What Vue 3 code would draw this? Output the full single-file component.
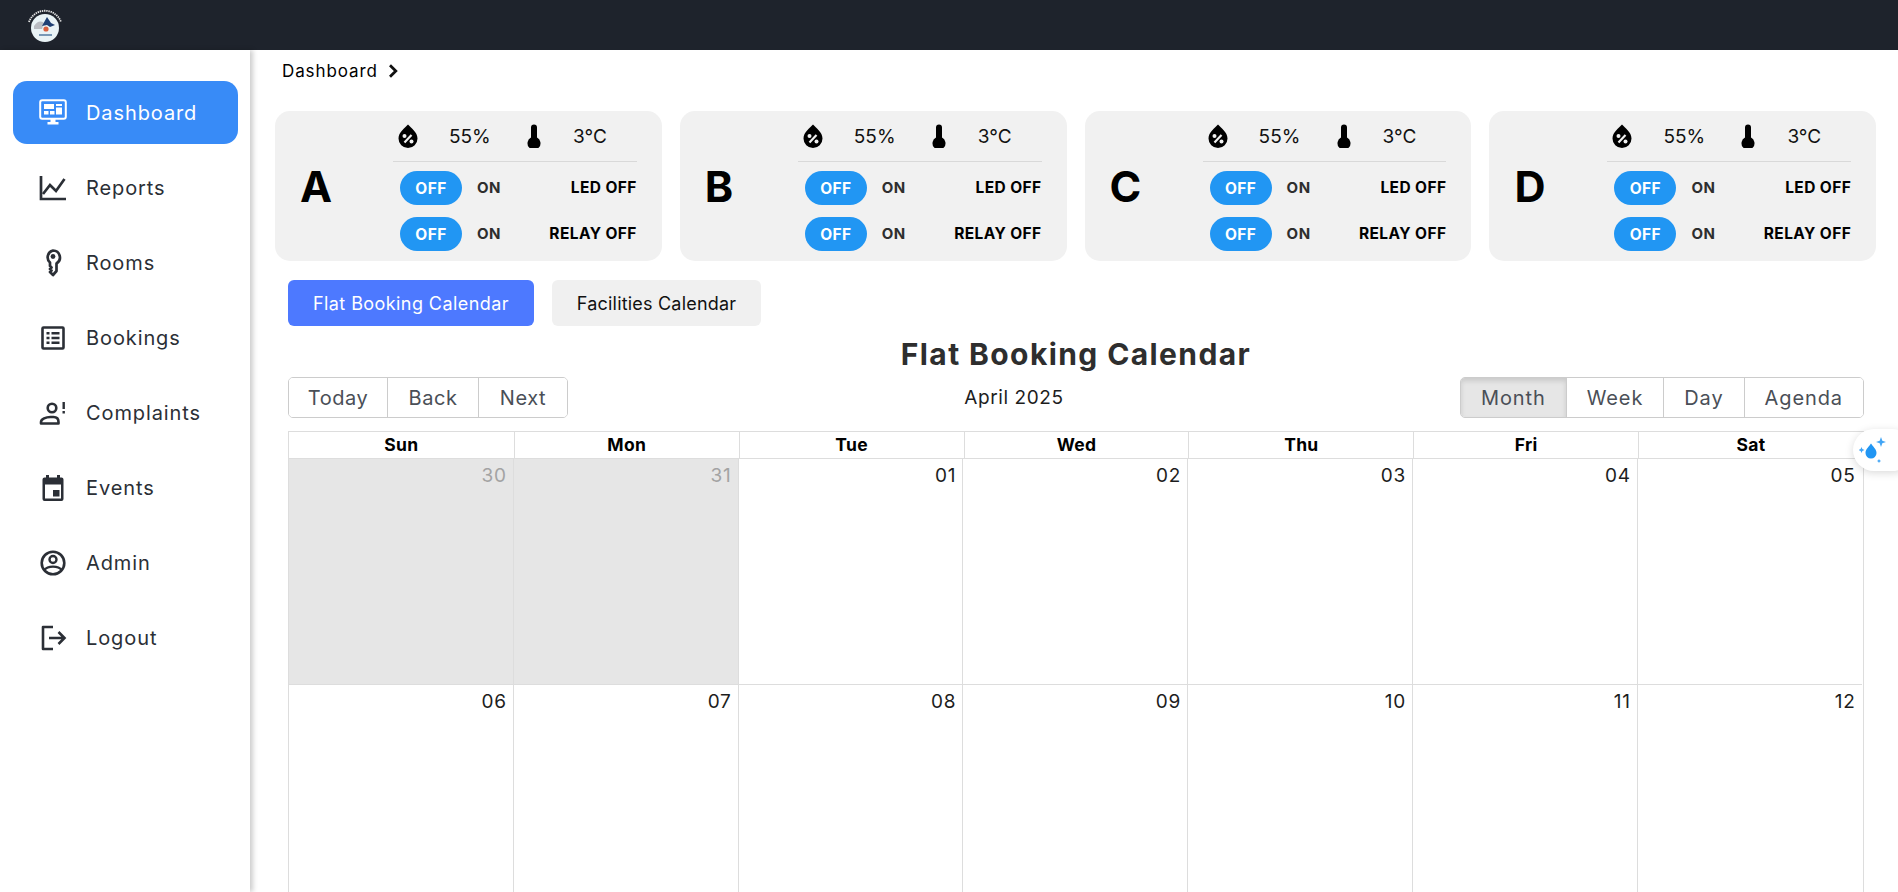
<script setup>
const navItems = [
  { label: 'Dashboard', icon: 'monitor', active: true },
  { label: 'Reports', icon: 'chart' },
  { label: 'Rooms', icon: 'key' },
  { label: 'Bookings', icon: 'list' },
  { label: 'Complaints', icon: 'person' },
  { label: 'Events', icon: 'event' },
  { label: 'Admin', icon: 'account' },
  { label: 'Logout', icon: 'logout' },
]

const rooms = ['A', 'B', 'C', 'D']
const weekdays = ['Sun', 'Mon', 'Tue', 'Wed', 'Thu', 'Fri', 'Sat']
const days = [
  { n: '30', off: true }, { n: '31', off: true }, { n: '01' }, { n: '02' }, { n: '03' }, { n: '04' }, { n: '05' },
  { n: '06' }, { n: '07' }, { n: '08' }, { n: '09' }, { n: '10' }, { n: '11' }, { n: '12' },
]
</script>

<template>
  <div class="page">
    <header class="topbar">
      <svg class="logo" viewBox="0 0 36 34" width="36" height="34">
        <circle cx="18" cy="20" r="14" fill="#e9f3f6" />
        <path d="M7 18 Q12 11 17 15 L15 21 H7 Z" fill="#b9bcc2" />
        <path d="M20 9 L24 15 L28 17 L23 19 L20 17 L15 18 Z" fill="#1f3f73" />
        <circle cx="19" cy="21" r="2.6" fill="#d9603f" />
        <path d="M12 27 H25" stroke="#2b5c8c" stroke-width="1.2" />
        <path d="M2 14 A17 17 0 0 1 34 14" fill="none" stroke="#e6e6e6" stroke-width="1.8" stroke-dasharray="1.4 .8" />
      </svg>
    </header>

    <div class="body">
      <nav class="sidebar">
        <a v-for="item in navItems" :key="item.label" class="nav-item" :class="{ active: item.active }">
          <svg class="nav-icon" viewBox="0 0 28 28" width="28" height="28">
            <template v-if="item.icon === 'monitor'">
              <rect x="1.2" y="1.2" width="25.6" height="18.6" rx="2" fill="none" stroke="currentColor" stroke-width="2" />
              <path d="M5 5h10v5H5zM17 5h6v2h-6zM17 8.500h6v7h-6zM5 12h4.500v3.500H5zM11 12h4.500v3.500H11z" fill="currentColor" />
              <path d="M11.500 20h5v3h-5zM8.500 23h11v2.500h-11z" fill="currentColor" />
            </template>
            <template v-else-if="item.icon === 'chart'">
              <path d="M2 2v23h25" fill="none" stroke="currentColor" stroke-width="2.700" />
              <path d="M4 20 L11 11 L17 17 L25.500 5" fill="none" stroke="currentColor" stroke-width="2.700" />
            </template>
            <template v-else-if="item.icon === 'key'">
              <path d="M14 1.500a7 7 0 0 1 3.500 13V22l-3.500 4-3-3 1.500-1.500-1.500-1.500 1.500-1.500-1.500-1.500v-3.500A7 7 0 0 1 14 1.500z" fill="none" stroke="currentColor" stroke-width="2.700" stroke-linejoin="round" />
              <circle cx="14" cy="7.500" r="2.400" fill="currentColor" />
            </template>
            <template v-else-if="item.icon === 'list'">
              <rect x="3.500" y="3.500" width="21" height="21" rx="1" fill="none" stroke="currentColor" stroke-width="2.600" />
              <path d="M7.500 8h3v2.400h-3zM7.500 12.800h3v2.400h-3zM7.500 17.600h3V20h-3zM12.500 8h8v2.400h-8zM12.500 12.800h8v2.400h-8zM12.500 17.600h8V20h-8z" fill="currentColor" />
            </template>
            <template v-else-if="item.icon === 'person'">
              <circle cx="13" cy="9" r="4.300" fill="none" stroke="currentColor" stroke-width="2.600" />
              <path d="M2 24.500v-1.500c0-3 5-5 9.500-5h3c4 0 5 2 5 5v1.500z" fill="none" stroke="currentColor" stroke-width="2.600" stroke-linejoin="round" />
              <path d="M23.500 3h2.400v7h-2.400zM23.500 12h2.400v2.400h-2.400z" fill="currentColor" />
            </template>
            <template v-else-if="item.icon === 'event'">
              <path d="M7 1h3v2.500h8V1h3v2.500h1.500a2 2 0 0 1 2 2V25a2 2 0 0 1-2 2H5.500a2 2 0 0 1-2-2V5.500a2 2 0 0 1 2-2H7zM6 10.500V24.500h16V10.500z" fill="currentColor" fill-rule="evenodd" />
              <path d="M14 16h6.500v6.500H14z" fill="currentColor" />
            </template>
            <template v-else-if="item.icon === 'account'">
              <circle cx="14" cy="14" r="11.300" fill="none" stroke="currentColor" stroke-width="2.600" />
              <circle cx="14" cy="10.500" r="3.500" fill="none" stroke="currentColor" stroke-width="2.400" />
              <path d="M5.500 21c3-4.500 14-4.500 17 0" fill="none" stroke="currentColor" stroke-width="2.400" />
            </template>
            <template v-else>
              <path d="M14 3H4v22h10" fill="none" stroke="currentColor" stroke-width="2.600" stroke-linejoin="round" />
              <path d="M10 14h15M19.500 8l6 6-6 6" fill="none" stroke="currentColor" stroke-width="2.600" />
            </template>
          </svg>
          <span>{{ item.label }}</span>
        </a>
      </nav>

      <main class="content">
        <div class="crumb">
          <span>Dashboard</span>
          <svg viewBox="0 0 10 14" width="10" height="14">
            <path d="M2 1.200 L7.800 7 L2 12.800" fill="none" stroke="#111" stroke-width="2.800" />
          </svg>
        </div>

        <section class="cards">
          <div v-for="room in rooms" :key="room" class="card">
            <div class="room">{{ room }}</div>
            <div class="room-info">
              <div class="sensors">
                <svg class="drop" viewBox="0 0 22 24" width="22" height="24">
                  <path d="M11 0.500C14 4 20.500 8 20.500 14.500a9.500 9.500 0 0 1-19 0C1.500 8 8 4 11 0.500z" fill="#000" />
                  <path d="M7.500 18.500 L14.500 11" stroke="#f1f1f1" stroke-width="2.200" />
                  <circle cx="7.500" cy="12" r="2" fill="#f1f1f1" />
                  <circle cx="14.500" cy="17.500" r="2" fill="#f1f1f1" />
                </svg>
                <span class="humidity">55%</span>
                <svg class="thermo" viewBox="0 0 14 24" width="14" height="24">
                  <path d="M4 3.500a3 3 0 0 1 6 0v10a6.500 6.500 0 1 1-6 0z" fill="#000" />
                </svg>
                <span class="temp">3°C</span>
              </div>
              <div class="switch-row">
                <span class="toggle">OFF</span>
                <span class="on">ON</span>
                <span class="state">LED OFF</span>
              </div>
              <div class="switch-row">
                <span class="toggle">OFF</span>
                <span class="on">ON</span>
                <span class="state">RELAY OFF</span>
              </div>
            </div>
          </div>
        </section>

        <div class="cal-wrap">
          <div class="tabs">
            <button class="tab tab-active">Flat Booking Calendar</button>
            <button class="tab">Facilities Calendar</button>
          </div>

          <h1 class="cal-title">Flat Booking Calendar</h1>

          <div class="toolbar">
            <div class="btn-group nav-group">
              <button>Today</button>
              <button>Back</button>
              <button>Next</button>
            </div>
            <div class="month-label">April 2025</div>
            <div class="btn-group view-group">
              <button class="pressed">Month</button>
              <button>Week</button>
              <button>Day</button>
              <button>Agenda</button>
            </div>
          </div>

          <div class="calendar">
            <div class="cal-head">
              <div v-for="d in weekdays" :key="d">{{ d }}</div>
            </div>
            <div class="cal-grid">
              <div v-for="d in days" :key="d.n" class="cell" :class="{ off: d.off }">{{ d.n }}</div>
            </div>
          </div>
        </div>
      </main>
    </div>

    <div class="floater">
      <svg viewBox="0 0 32 30" width="32" height="30">
        <path d="M12 8.500c1.800 3 5.500 5.500 5.500 9.500a5.500 5.500 0 0 1-11 0C6.500 14 10.200 11.500 12 8.500z" fill="#2196f3" />
        <path d="M22 2l1.300 3.700L27 7l-3.700 1.300L22 12l-1.300-3.700L17 7l3.700-1.300zM2.500 12l.9 2.100 2.100.9-2.100.9-.9 2.100-.9-2.100L-.5 15l2.100-.9zM20 24l.7 1.300 1.300.7-1.300.7-.7 1.300-.7-1.300L18 26l1.300-.7z" fill="#42a5f5" />
      </svg>
    </div>
  </div>
</template>

<style>
html, body { margin: 0; background: #fff; }
</style>

<style scoped>
.page {
  position: relative;
  width: 1898px;
  height: 892px;
  overflow: hidden;
  background: #fff;
  font-family: Inter, "Liberation Sans", sans-serif;
  color: #212529;
}
.topbar {
  height: 50px;
  background: #1e232c;
  display: flex;
  align-items: center;
  padding-left: 27px;
}
.body { display: flex; height: 842px; }
.sidebar {
  width: 250px;
  flex: none;
  box-sizing: border-box;
  padding: 31px 12px 0 13px;
  box-shadow: 3px 0 5px rgba(0, 0, 0, 0.2);
  display: flex;
  flex-direction: column;
  gap: 12px;
  position: relative;
}
.nav-item {
  height: 63px;
  display: flex;
  align-items: center;
  gap: 19px;
  padding-left: 26px;
  border-radius: 14px;
  font-size: 20px;
  letter-spacing: 0.9px;
  color: #2b2f36;
}
.nav-item.active { background: #388bf7; color: #fff; }
.nav-icon { flex: none; }

.content { flex: 1; min-width: 0; padding: 0 22px 0 25px; }
.crumb {
  display: flex;
  align-items: center;
  gap: 10px;
  height: 42px;
  padding-left: 7px;
  font-size: 17px;
  letter-spacing: 0.9px;
  color: #000;
}
.cards {
  margin-top: 19px;
  display: grid;
  grid-template-columns: repeat(4, 386.800px);
  gap: 18px;
}
.card {
  height: 150px;
  background: #f1f1f1;
  border-radius: 15px;
  display: flex;
  padding: 0 25px 0 25px;
  box-sizing: border-box;
}
.room {
  width: 93px;
  flex: none;
  font-size: 43px;
  font-weight: 700;
  color: #000;
  display: flex;
  align-items: center;
}
.room-info { flex: 1; }
.sensors {
  height: 50px;
  border-bottom: 1px solid #d9d9d9;
  display: flex;
  align-items: center;
  font-size: 19px;
  color: #111;
  padding-left: 4px;
}
.humidity { margin-left: 30px; width: 60px; }
.thermo { margin-left: 18px; }
.temp { margin-left: 32px; }
.switch-row {
  display: flex;
  align-items: center;
  height: 34px;
  margin-top: 12px;
  padding-left: 7px;
}
.sensors + .switch-row { margin-top: 9px; }
.toggle {
  width: 62px;
  height: 34px;
  border-radius: 17px;
  background: #2196f3;
  color: #fff;
  font-weight: 700;
  font-size: 15.500px;
  letter-spacing: 0.4px;
  display: flex;
  align-items: center;
  justify-content: center;
}
.on {
  margin-left: 15px;
  font-weight: 700;
  font-size: 15px;
  letter-spacing: 0.5px;
  color: #2e2e2e;
  margin-top: -1px;
}
.state {
  margin-left: auto;
  margin-top: -2px;
  font-weight: 700;
  font-size: 15.500px;
  letter-spacing: 0.4px;
  color: #000;
}

.cal-wrap { margin-left: 13px; width: 1576px; }
.tabs { display: flex; gap: 18px; margin-top: 19px; }
.tab {
  height: 46px;
  border: 0;
  border-radius: 6px;
  font-family: inherit;
  font-size: 18px;
  letter-spacing: 0.2px;
  background: #f0f0f0;
  color: #111;
  padding: 0 25px;
}
.tab-active { background: #4d79ff; color: #fff; letter-spacing: 0.42px; }

.cal-title {
  margin: 10px 0 0;
  text-align: center;
  font-size: 30px;
  line-height: 36px;
  font-weight: 700;
  color: #2e2e2e;
  letter-spacing: 1.4px;
}
.toolbar {
  margin-top: 5px;
  display: flex;
  align-items: center;
}
.btn-group {
  display: flex;
  height: 41px;
  border: 1px solid #ccc;
  border-radius: 5px;
  overflow: hidden;
  box-sizing: border-box;
}
.btn-group button {
  border: 0;
  border-left: 1px solid #ccc;
  background: #fff;
  font-family: inherit;
  font-size: 20px;
  color: #4a4f57;
  padding: 0 20px;
}
.btn-group button:first-child { border-left: 0; }
.nav-group button { letter-spacing: 0.55px; padding: 0; }
.nav-group button:nth-child(1) { width: 98px; }
.nav-group button:nth-child(2) { width: 91px; }
.nav-group button:nth-child(3) { width: 89px; }
.view-group button { letter-spacing: 0.9px; }
.btn-group .pressed {
  background: #e6e6e6;
  box-shadow: inset 0 3px 5px rgba(0, 0, 0, 0.125);
}
.month-label {
  flex: 1;
  text-align: center;
  font-size: 19px;
  letter-spacing: 0.6px;
  color: #1d1d1d;
}

.calendar { margin-top: 13px; border-left: 1px solid #ddd; border-right: 1px solid #ddd; box-sizing: border-box; }
.cal-head {
  display: grid;
  grid-template-columns: repeat(7, 1fr);
  border-top: 1px solid #ddd;
  border-bottom: 1px solid #ddd;
  height: 28px;
  box-sizing: border-box;
}
.cal-head div {
  text-align: center;
  font-weight: 700;
  font-size: 17.500px;
  letter-spacing: 0.3px;
  line-height: 26px;
  color: #000;
  border-left: 1px solid #ddd;
}
.cal-head div:first-child { border-left: 0; }
.cal-grid { display: grid; grid-template-columns: repeat(7, 224.800px); grid-auto-rows: 226px; margin-left: -1px; }
.cell {
  border-left: 1px solid #ddd;
  border-bottom: 1px solid #ddd;
  padding: 3px 6px 0 0;
  text-align: right;
  font-size: 19px;
  line-height: 27px;
  letter-spacing: 0.8px;
  color: #1d1d1d;
  box-sizing: border-box;
}
.cell.off { background: #e6e6e6; color: #a3a3a3; }

.floater {
  position: absolute;
  left: 1853px;
  top: 429px;
  width: 60px;
  height: 42px;
  border-radius: 21px;
  background: #fff;
  box-shadow: 0 2px 8px rgba(0, 0, 0, 0.15);
  display: flex;
  align-items: center;
  padding-left: 6px;
  box-sizing: border-box;
}
</style>
